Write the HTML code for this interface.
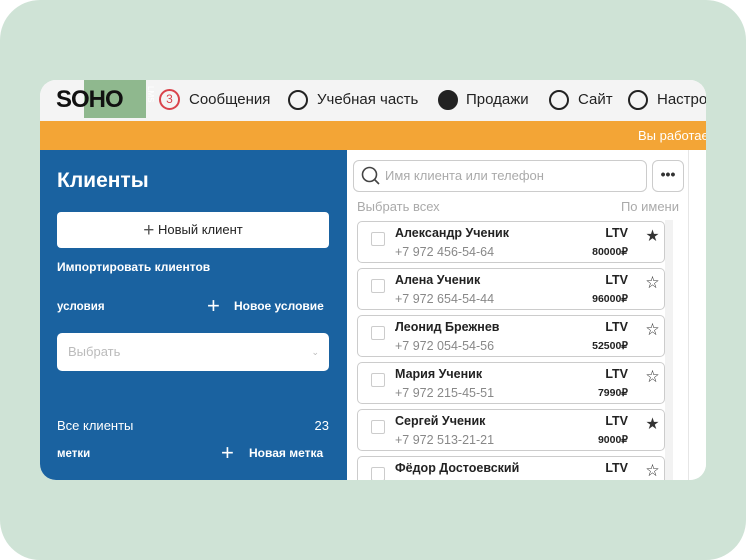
<!DOCTYPE html>
<html><head><meta charset="utf-8"><style>
*{box-sizing:border-box;margin:0;padding:0}
body{width:746px;height:560px;background:#fff;font-family:"Liberation Sans","Noto Sans CJK SC",sans-serif;overflow:hidden}
.bg{position:absolute;left:0;top:0;width:746px;height:560px;background:#cfe3d6;border-radius:40px}
.win{position:absolute;left:40px;top:80px;width:666px;height:400px;border-radius:16px;overflow:hidden;background:#fff}
.hdr{position:absolute;left:0;top:0;width:666px;height:41px;background:#f4f4f4;font-size:15px;color:#222}
.hdr span{position:absolute;top:11px;white-space:nowrap}
.circ{position:absolute;top:10px;width:20px;height:20px;border:2px solid #222;border-radius:50%}
.orange{position:absolute;left:0;top:41px;width:666px;height:29px;background:#f3a536;color:#fff;font-size:13px}
.side{position:absolute;left:0;top:70px;width:307px;height:330px;background:#1a62a0;color:#fff}
.main{position:absolute;left:307px;top:70px;width:359px;height:330px;background:#fff}
.card{position:absolute;left:10px;width:308px;height:42px;border:1px solid #ccc;border-radius:5px;background:#fff}
.cb{position:absolute;left:13px;top:10px;width:14px;height:14px;border:1px solid #ccc;border-radius:2px}
.nm{position:absolute;left:37px;top:4px;font-size:12.5px;font-weight:bold;color:#222}
.ph{position:absolute;left:37px;top:23px;font-size:12.5px;color:#888}
.ltv{position:absolute;right:36px;top:4px;font-size:12.5px;font-weight:bold;color:#222}
.sum{position:absolute;right:36px;top:24px;font-size:10.5px;font-weight:bold;color:#222}
.st{position:absolute;left:288px;top:3px;font-size:13px;color:#333}
</style></head><body>
<div class="bg"></div>
<div class="win">
 <div class="hdr">
  <div style="position:absolute;left:44px;top:0;width:62px;height:38px;background:#8fb88e"></div>
  <div style="position:absolute;left:16px;top:6px;font-size:24px;font-weight:bold;color:#111;letter-spacing:-1px">SOHO</div>
  <div style="position:absolute;left:106px;top:6px;font-size:8px;color:#fff;writing-mode:vertical-rl">LMS</div>
  <div style="position:absolute;left:119px;top:9px;width:21px;height:21px;border:2px solid #d9434b;border-radius:50%;color:#d9434b;font-size:12px;text-align:center;line-height:17px">3</div>
  <span style="left:149px">Сообщения</span>
  <div class="circ" style="left:248px"></div><span style="left:277px">Учебная часть</span>
  <div class="circ" style="left:398px;background:#222"></div><span style="left:426px">Продажи</span>
  <div class="circ" style="left:509px"></div><span style="left:538px">Сайт</span>
  <div class="circ" style="left:588px"></div><span style="left:617px">Настройки</span>
 </div>
 <div class="orange"><span style="position:absolute;left:598px;top:7px;white-space:nowrap">Вы работаете</span></div>
 <div class="side">
  <div style="position:absolute;left:17px;top:19px;font-size:21px;font-weight:bold">Клиенты</div>
  <div style="position:absolute;left:17px;top:62px;width:272px;height:36px;background:#fff;border-radius:4px;color:#222;font-size:13px;text-align:center;line-height:36px;font-weight:500"><span style="font-size:19px;font-weight:300;color:#555;vertical-align:-2px">+</span> Новый клиент</div>
  <div style="position:absolute;left:17px;top:110px;font-size:12px;font-weight:bold">Импортировать клиентов</div>
  <div style="position:absolute;left:17px;top:151px;font-size:11.5px;font-weight:bold">условия</div>
  <div style="position:absolute;left:167px;top:143px;font-size:22px">+</div>
  <div style="position:absolute;left:194px;top:149px;font-size:12px;font-weight:bold">Новое условие</div>
  <div style="position:absolute;left:17px;top:183px;width:272px;height:38px;background:#fff;border-radius:5px;color:#bbb;font-size:13px;line-height:38px;padding-left:11px">Выбрать<span style="position:absolute;right:10px;font-size:9px">⌄</span></div>
  <div style="position:absolute;left:17px;top:268px;font-size:13px">Все клиенты</div>
  <div style="position:absolute;right:18px;top:268px;font-size:13px">23</div>
  <div style="position:absolute;left:17px;top:298px;font-size:11.5px;font-weight:bold">метки</div>
  <div style="position:absolute;left:181px;top:290px;font-size:22px">+</div>
  <div style="position:absolute;left:209px;top:296px;font-size:12px;font-weight:bold">Новая метка</div>
 </div>
 <div class="main">
  <div style="position:absolute;left:6px;top:10px;width:294px;height:32px;border:1px solid #ccc;border-radius:6px"></div>
  <svg style="position:absolute;left:14px;top:16px" width="20" height="20" viewBox="0 0 20 20"><circle cx="8.5" cy="8.5" r="7" fill="none" stroke="#444" stroke-width="1.6"/><path d="M13.5 13.5L18 18" stroke="#444" stroke-width="1.6"/></svg>
  <div style="position:absolute;left:38px;top:18px;font-size:13px;color:#aaa">Имя клиента или телефон</div>
  <div style="position:absolute;left:305px;top:10px;width:32px;height:32px;border:1px solid #ccc;border-radius:6px;text-align:center;font-size:14px;font-weight:bold;line-height:26px;color:#333">•••</div>
  <div style="position:absolute;left:10px;top:49px;font-size:13px;color:#aaa">Выбрать всех</div>
  <div style="position:absolute;right:27px;top:49px;font-size:13px;color:#aaa">По имени</div>
  <div style="position:absolute;left:318px;top:70px;width:8px;height:260px;background:#f2f2f2"></div>
  <div style="position:absolute;left:341px;top:0;width:1px;height:330px;background:#e6e6e6"></div>
  <div class="card" style="top:71px"><div class="cb"></div><div class="nm">Александр Ученик</div><div class="ph">+7 972 456-54-64</div><div class="ltv">LTV</div><div class="sum">80000₽</div><div class="st">★</div></div>
  <div class="card" style="top:118px"><div class="cb"></div><div class="nm">Алена Ученик</div><div class="ph">+7 972 654-54-44</div><div class="ltv">LTV</div><div class="sum">96000₽</div><div class="st">☆</div></div>
  <div class="card" style="top:165px"><div class="cb"></div><div class="nm">Леонид Брежнев</div><div class="ph">+7 972 054-54-56</div><div class="ltv">LTV</div><div class="sum">52500₽</div><div class="st">☆</div></div>
  <div class="card" style="top:212px"><div class="cb"></div><div class="nm">Мария Ученик</div><div class="ph">+7 972 215-45-51</div><div class="ltv">LTV</div><div class="sum">7990₽</div><div class="st">☆</div></div>
  <div class="card" style="top:259px"><div class="cb"></div><div class="nm">Сергей Ученик</div><div class="ph">+7 972 513-21-21</div><div class="ltv">LTV</div><div class="sum">9000₽</div><div class="st">★</div></div>
  <div class="card" style="top:306px"><div class="cb"></div><div class="nm">Фёдор Достоевский</div><div class="ltv">LTV</div><div class="st">☆</div></div>
 </div>
</div>
</body></html>
